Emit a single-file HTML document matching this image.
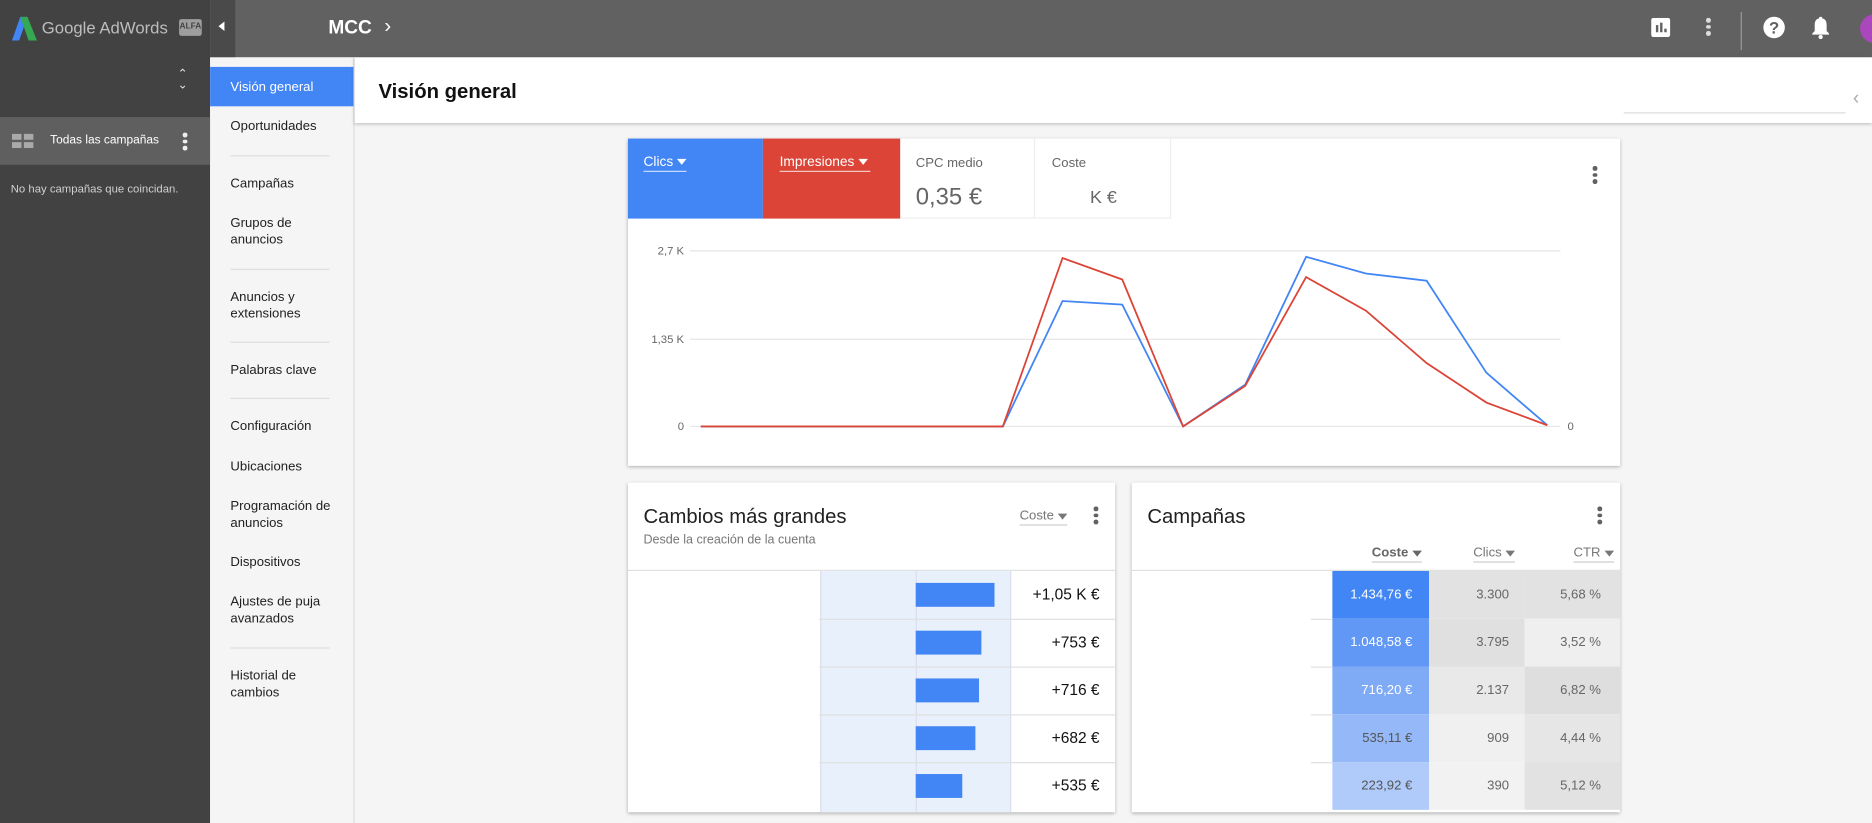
<!DOCTYPE html>
<html><head><meta charset="utf-8"><style>
*{margin:0;padding:0;box-sizing:border-box}
html,body{width:1872px;height:823px;overflow:hidden;background:#f5f5f5;font-family:"Liberation Sans",Arial,sans-serif}
#w{position:absolute;left:0;top:0;width:1568px;height:689px;transform:scale(1.19388,1.19448);transform-origin:0 0;background:#f5f5f5}
.a{position:absolute}
.card{position:absolute;background:#fff;box-shadow:0 1px 3px rgba(0,0,0,.3)}
.nav div{position:absolute;left:17px;width:100px;font-size:11px;color:#212121;line-height:14px;white-space:nowrap}
.hr{position:absolute;left:17px;width:83px;height:1px;background:#ddd}
.dots{position:absolute;width:4px}
.dots i{display:block;width:3.5px;height:3.5px;border-radius:50%;background:#616161;margin-bottom:2px}
.tri{display:inline-block;width:0;height:0;border-left:4px solid transparent;border-right:4px solid transparent;border-top:5px solid currentColor;vertical-align:middle;margin-left:3px}
.cell{position:absolute;height:40px;line-height:40px;text-align:right;font-size:11px}
</style></head><body><div id="w">
<!-- left sidebar -->
<div class="a" style="left:0;top:0;width:176px;height:689px;background:#424242"></div>
<svg class="a" style="left:10px;top:14px" width="22" height="20" viewBox="0 0 22 20"><polygon points="7,0 13,0 6,20 0,20" fill="#4285f4"/><polygon points="7,0 13,0 21,20 14,20" fill="#34a853"/></svg>
<div class="a" style="left:35px;top:15px;font-size:14px;color:#bdbdbd;white-space:nowrap">Google AdWords</div>
<div class="a" style="left:150px;top:16px;width:19px;height:14px;background:#9e9e9e;border-radius:2px;font-size:7px;color:#444;line-height:14px;text-align:center;font-weight:bold">ALFA</div>
<div class="a" style="left:148px;top:58px;color:#e0e0e0;font-size:10px;line-height:9px;text-align:center;width:10px">&#8963;<br>&#8964;</div>
<div class="a" style="left:0;top:98px;width:176px;height:40px;background:#5f5f5f"></div>
<svg class="a" style="left:10px;top:112px" width="18" height="12"><rect x="0" y="0" width="8" height="5" fill="#aaa"/><rect x="10" y="0" width="8" height="5" fill="#aaa"/><rect x="0" y="7" width="8" height="5" fill="#aaa"/><rect x="10" y="7" width="8" height="5" fill="#aaa"/></svg>
<div class="a" style="left:42px;top:112px;font-size:10px;color:#fff;white-space:nowrap">Todas las campañas</div>
<div class="dots" style="left:153px;top:111px"><i style="background:#eee"></i><i style="background:#eee"></i><i style="background:#eee"></i></div>
<div class="a" style="left:9px;top:153px;font-size:9.5px;color:#d0d0d0;white-space:nowrap">No hay campañas que coincidan.</div>
<!-- top bar -->
<div class="a" style="left:176px;top:0;width:1392px;height:48px;background:#616161"></div>
<div class="a" style="left:176px;top:0;width:21px;height:48px;background:#4a4a4a"></div>
<div class="a" style="left:183px;top:18px;width:0;height:0;border-top:4px solid transparent;border-bottom:4px solid transparent;border-right:5px solid #fff"></div>
<div class="a" style="left:275px;top:15px;font-size:16px;font-weight:bold;color:#fff">MCC</div>
<div class="a" style="left:322px;top:12px;font-size:17px;color:#fff">&#8250;</div>
<svg class="a" style="left:1383px;top:15px" width="16" height="16"><rect width="16" height="16" rx="2" fill="#fff"/><rect x="4" y="6" width="2" height="6" fill="#616161"/><rect x="7.5" y="4" width="2" height="8" fill="#616161"/><rect x="11" y="9" width="2" height="3" fill="#616161"/></svg>
<div class="dots" style="left:1429px;top:15px"><i style="background:#ddd"></i><i style="background:#ddd"></i><i style="background:#ddd"></i></div>
<div class="a" style="left:1458px;top:10px;width:1px;height:32px;background:#999"></div>
<div class="a" style="left:1477px;top:14px;width:18px;height:18px;border-radius:50%;background:#fff;color:#616161;font-size:14px;font-weight:bold;text-align:center;line-height:18px">?</div>
<svg class="a" style="left:1517px;top:13px" width="16" height="20" viewBox="0 0 16 20"><path d="M8 1c-1 0-1.5.7-1.5 1.5C4 3 3 5 3 8v5l-2 2v1h14v-1l-2-2V8c0-3-1-5-3.5-5.5C9.5 1.7 9 1 8 1z" fill="#fff"/><circle cx="8" cy="18" r="1.8" fill="#fff"/></svg>
<div class="a" style="left:1558px;top:12px;width:24px;height:24px;border-radius:50%;background:#ab47bc"></div>
<!-- nav -->
<div class="a" style="left:176px;top:48px;width:121px;height:641px;background:#f5f5f5;border-right:1px solid #ddd"></div>
<div class="a" style="left:176px;top:56px;width:120px;height:33px;background:#4285f4"></div>
<div class="nav a" style="left:176px;top:0;width:121px;height:689px">
<div style="top:66px;color:#fff">Visión general</div>
<div style="top:99px">Oportunidades</div>
<span class="hr" style="top:130px"></span>
<div style="top:147px">Campañas</div>
<div style="top:180px">Grupos de<br>anuncios</div>
<span class="hr" style="top:225px"></span>
<div style="top:242px">Anuncios y<br>extensiones</div>
<span class="hr" style="top:286px"></span>
<div style="top:303px">Palabras clave</div>
<span class="hr" style="top:333px"></span>
<div style="top:350px">Configuración</div>
<div style="top:384px">Ubicaciones</div>
<div style="top:417px">Programación de<br>anuncios</div>
<div style="top:464px">Dispositivos</div>
<div style="top:497px">Ajustes de puja<br>avanzados</div>
<span class="hr" style="top:542px"></span>
<div style="top:559px">Historial de<br>cambios</div>
</div>
<!-- content header -->
<div class="a" style="left:297px;top:48px;width:1271px;height:55px;background:#fff;box-shadow:0 1px 3px rgba(0,0,0,.25)"></div>
<div class="a" style="left:317px;top:67px;font-size:17px;font-weight:bold;color:#111">Visión general</div>
<div class="a" style="left:1360px;top:94px;width:186px;height:1px;background:#ddd"></div>
<div class="a" style="left:1552px;top:74px;font-size:16px;color:#aaa">&#8249;</div>
<!-- chart card -->
<div class="card" style="left:526px;top:116px;width:831px;height:274px"></div>
<div class="a" style="left:526px;top:116px;width:113px;height:67px;background:#4285f4"></div>
<div class="a" style="left:639px;top:116px;width:115px;height:67px;background:#db4437"></div>
<div class="a" style="left:539px;top:130px;font-size:11.5px;color:#fff;border-bottom:1px solid rgba(255,255,255,.7);padding-bottom:1px">Clics<span class="tri"></span></div>
<div class="a" style="left:653px;top:130px;font-size:11.5px;color:#fff;border-bottom:1px solid rgba(255,255,255,.7);padding-bottom:1px;padding-right:2px">Impresiones<span class="tri"></span></div>
<div class="a" style="left:754px;top:116px;width:113px;height:67px;border-right:1px solid #eee;border-bottom:1px solid #eee"></div>
<div class="a" style="left:867px;top:116px;width:114px;height:67px;border-right:1px solid #eee;border-bottom:1px solid #eee"></div>
<div class="a" style="left:767px;top:131px;font-size:11px;color:#666">CPC medio</div>
<div class="a" style="left:767px;top:154px;font-size:20px;color:#666">0,35 €</div>
<div class="a" style="left:881px;top:131px;font-size:11px;color:#666">Coste</div>
<div class="a" style="left:913px;top:157px;font-size:15px;color:#666">K €</div>
<div class="dots" style="left:1334px;top:139px"><i></i><i></i><i></i></div>
<svg class="a" style="left:526px;top:116px" width="831" height="274">
<g stroke="#e6e6e6" stroke-width="1"><line x1="52" y1="94" x2="781" y2="94"/><line x1="52" y1="168" x2="781" y2="168"/><line x1="52" y1="241" x2="781" y2="241"/></g>
<g font-family="Liberation Sans,Arial,sans-serif" font-size="9.5" fill="#666" text-anchor="end"><text x="47" y="97">2,7 K</text><text x="47" y="171">1,35 K</text><text x="47" y="244">0</text><text x="787" y="244" text-anchor="start">0</text></g>
<g transform="translate(-526,-116)" fill="none" stroke-width="1.5">
<polyline stroke="#4285f4" points="587,357 840,357 890,252 940,255 991,357 1043,322 1094,215 1144,229 1195,235 1245,312 1296,356"/>
<polyline stroke="#db4437" points="587,357 840,357 890,216 940,234 991,357 1043,323 1094,232 1144,260 1195,304 1245,337 1296,356"/>
</g></svg>
<!-- changes card -->
<div class="card" style="left:526px;top:404px;width:408px;height:276px"></div>
<div class="a" style="left:539px;top:423px;font-size:17px;color:#212121">Cambios más grandes</div>
<div class="a" style="left:539px;top:446px;font-size:10.5px;color:#777">Desde la creación de la cuenta</div>
<div class="a" style="left:854px;top:426px;font-size:11px;color:#777;border-bottom:1px solid #ccc;padding-bottom:1px">Coste<span class="tri"></span></div>
<div class="dots" style="left:916px;top:424px"><i></i><i></i><i></i></div>
<div class="a" style="left:526px;top:477px;width:408px;height:1px;background:#e0e0e0"></div>
<div class="a" style="left:687px;top:478px;width:160px;height:202px;background:#e8f0fc;border-left:1px solid #dde;border-right:1px solid #dde"></div>
<div class="a" style="left:767px;top:478px;width:1px;height:202px;background:#dde"></div>
<div class="a" style="left:767px;top:488px;width:66px;height:20px;background:#4285f4"></div>
<div class="a" style="left:767px;top:528px;width:55px;height:20px;background:#4285f4"></div>
<div class="a" style="left:767px;top:568px;width:53px;height:20px;background:#4285f4"></div>
<div class="a" style="left:767px;top:608px;width:50px;height:20px;background:#4285f4"></div>
<div class="a" style="left:767px;top:648px;width:39px;height:20px;background:#4285f4"></div>
<div class="a" style="left:686px;top:518px;width:248px;height:1px;background:#e0e0e0"></div>
<div class="a" style="left:686px;top:558px;width:248px;height:1px;background:#e0e0e0"></div>
<div class="a" style="left:686px;top:598px;width:248px;height:1px;background:#e0e0e0"></div>
<div class="a" style="left:686px;top:638px;width:248px;height:1px;background:#e0e0e0"></div>
<div class="cell" style="left:847px;top:478px;width:74px;font-size:13px;color:#111">+1,05 K €</div>
<div class="cell" style="left:847px;top:518px;width:74px;font-size:13px;color:#111">+753 €</div>
<div class="cell" style="left:847px;top:558px;width:74px;font-size:13px;color:#111">+716 €</div>
<div class="cell" style="left:847px;top:598px;width:74px;font-size:13px;color:#111">+682 €</div>
<div class="cell" style="left:847px;top:638px;width:74px;font-size:13px;color:#111">+535 €</div>
<!-- campaigns card -->
<div class="card" style="left:948px;top:404px;width:409px;height:276px"></div>
<div class="a" style="left:961px;top:423px;font-size:17px;color:#212121">Campañas</div>
<div class="dots" style="left:1338px;top:424px"><i></i><i></i><i></i></div>
<div class="a" style="left:1149px;top:457px;font-size:11px;font-weight:bold;color:#666;border-bottom:1px solid #ccc;padding-bottom:1px">Coste<span class="tri"></span></div>
<div class="a" style="left:1234px;top:457px;font-size:11px;color:#777;border-bottom:1px solid #ccc;padding-bottom:1px">Clics<span class="tri"></span></div>
<div class="a" style="left:1318px;top:457px;font-size:11px;color:#777;border-bottom:1px solid #ccc;padding-bottom:1px">CTR<span class="tri"></span></div>
<div class="a" style="left:948px;top:477px;width:409px;height:1px;background:#e0e0e0"></div>
<div class="cell" style="left:1116px;top:478px;width:81px;background:#4285f4;color:#fff;padding-right:14px">1.434,76 €</div>
<div class="cell" style="left:1116px;top:518px;width:81px;background:#6197f5;color:#fff;padding-right:14px">1.048,58 €</div>
<div class="cell" style="left:1116px;top:558px;width:81px;background:#7fabf6;color:#fff;padding-right:14px">716,20 €</div>
<div class="cell" style="left:1116px;top:598px;width:81px;background:#95b9f8;color:#555;padding-right:14px">535,11 €</div>
<div class="cell" style="left:1116px;top:638px;width:81px;background:#b0cbfa;color:#555;padding-right:14px">223,92 €</div>
<div class="cell" style="left:1197px;top:478px;width:80px;background:#e2e2e2;color:#666;padding-right:13px">3.300</div>
<div class="cell" style="left:1197px;top:518px;width:80px;background:#e0e0e0;color:#666;padding-right:13px">3.795</div>
<div class="cell" style="left:1197px;top:558px;width:80px;background:#e9e9e9;color:#666;padding-right:13px">2.137</div>
<div class="cell" style="left:1197px;top:598px;width:80px;background:#f0f0f0;color:#666;padding-right:13px">909</div>
<div class="cell" style="left:1197px;top:638px;width:80px;background:#f2f2f2;color:#666;padding-right:13px">390</div>
<div class="cell" style="left:1277px;top:478px;width:80px;background:#e2e2e2;color:#666;padding-right:16px">5,68 %</div>
<div class="cell" style="left:1277px;top:518px;width:80px;background:#efefef;color:#666;padding-right:16px">3,52 %</div>
<div class="cell" style="left:1277px;top:558px;width:80px;background:#dedede;color:#666;padding-right:16px">6,82 %</div>
<div class="cell" style="left:1277px;top:598px;width:80px;background:#e6e6e6;color:#666;padding-right:16px">4,44 %</div>
<div class="cell" style="left:1277px;top:638px;width:80px;background:#e2e2e2;color:#666;padding-right:16px">5,12 %</div>
<div class="a" style="left:1098px;top:518px;width:18px;height:1px;background:#e0e0e0"></div>
<div class="a" style="left:1098px;top:558px;width:18px;height:1px;background:#e0e0e0"></div>
<div class="a" style="left:1098px;top:598px;width:18px;height:1px;background:#e0e0e0"></div>
<div class="a" style="left:1098px;top:638px;width:18px;height:1px;background:#e0e0e0"></div>
</div></body></html>
